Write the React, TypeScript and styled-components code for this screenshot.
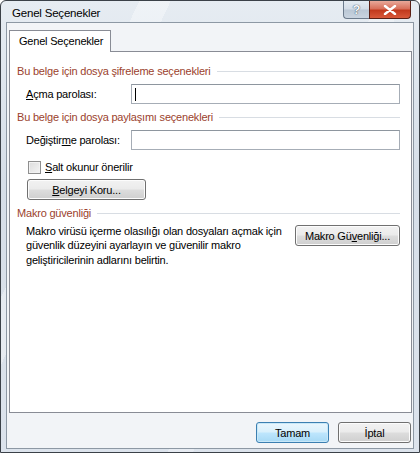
import styled, { createGlobalStyle } from 'styled-components';

const GlobalStyle = createGlobalStyle`
  html, body {
    margin: 0;
    padding: 0;
    background: #ffffff;
  }
  * {
    box-sizing: border-box;
  }
`;

const uiFont = `'Liberation Sans', Arial, sans-serif`;

const App = () => {
  return (
    <>
      <GlobalStyle />
      <Window>
        <TitleBar>
          <Title>Genel Seçenekler</Title>
          <Controls>
            <HelpButton aria-label="Yardım">?</HelpButton>
            <CloseButton aria-label="Kapat">
              <svg width="14" height="10" viewBox="0 0 14 10">
                <path
                  d="M2 1 L12 9 M12 1 L2 9"
                  stroke="#ffffff"
                  strokeWidth="2.4"
                  strokeLinecap="round"
                />
              </svg>
            </CloseButton>
          </Controls>
        </TitleBar>

        <Client>
          <TabStrip>
            <Tab>Genel Seçenekler</Tab>
          </TabStrip>
          <Panel>
            <SectionHeader>
              <SectionTitle>Bu belge için dosya şifreleme seçenekleri</SectionTitle>
              <Rule />
            </SectionHeader>
            <FieldRow>
              <FieldLabel>
                <Key>A</Key>çma parolası:
              </FieldLabel>
              <TextBox>
                <Caret />
              </TextBox>
            </FieldRow>

            <SectionHeader>
              <SectionTitle>Bu belge için dosya paylaşımı seçenekleri</SectionTitle>
              <Rule />
            </SectionHeader>
            <FieldRow>
              <FieldLabel>
                Değiştir<Key>m</Key>e parolası:
              </FieldLabel>
              <TextBox />
            </FieldRow>
            <CheckRow>
              <CheckBox />
              <span>
                <Key>S</Key>alt okunur önerilir
              </span>
            </CheckRow>
            <Indented>
              <PushButton $width={119}>
                <Key>B</Key>elgeyi Koru...
              </PushButton>
            </Indented>

            <SectionHeader>
              <SectionTitle>Makro güvenliği</SectionTitle>
              <Rule />
            </SectionHeader>
            <MacroRow>
              <MacroText>
                Makro virüsü içerme olasılığı olan dosyaları açmak için
                <br />
                güvenlik düzeyini ayarlayın ve güvenilir makro
                <br />
                geliştiricilerinin adlarını belirtin.
              </MacroText>
              <PushButton $width={105}>
                Makro Gü<Key>v</Key>enliği...
              </PushButton>
            </MacroRow>
          </Panel>

          <Footer>
            <PushButton $width={73} $default>
              Tamam
            </PushButton>
            <PushButton $width={73}>İptal</PushButton>
          </Footer>
        </Client>
      </Window>
    </>
  );
};

export default App;

const Window = styled.div`
  width: 420px;
  height: 453px;
  border: 1px solid #3b4148;
  border-radius: 6px 6px 0 0;
  background:
    linear-gradient(115deg, transparent 0 22%, rgba(255, 255, 255, 0.35) 22% 27%, transparent 27% 60%, rgba(255, 255, 255, 0.3) 60% 64%, transparent 64%),
    linear-gradient(180deg, #e6ecf2 0%, #d6dee8 40%, #dce3ec 100%);
  display: flex;
  flex-direction: column;
  font-family: ${uiFont};
  font-size: 11px;
  letter-spacing: -0.2px;
  color: #000000;
  overflow: hidden;
`;

const TitleBar = styled.div`
  height: 23px;
  display: flex;
  align-items: flex-start;
  padding-left: 11px;
`;

const Title = styled.div`
  margin-top: 6px;
  font-size: 11.5px;
  color: #000000;
  white-space: nowrap;
`;

const Controls = styled.div`
  margin-left: auto;
  margin-right: 8px;
  display: flex;
`;

const HelpButton = styled.div`
  width: 26px;
  height: 18px;
  border: 1px solid #6c7b8c;
  border-top: none;
  border-right: none;
  border-radius: 0 0 0 4px;
  background: linear-gradient(180deg, #e4ebf2 0%, #d3dce6 48%, #bac7d5 52%, #c9d4e0 100%);
  color: #f6f8fa;
  font-size: 13px;
  font-weight: bold;
  text-align: center;
  line-height: 17px;
  letter-spacing: 0;
  text-shadow: 0 0 1px #42505f, 0 0 1px #42505f;
`;

const CloseButton = styled.div`
  width: 42px;
  height: 18px;
  border: 1px solid #5a1f15;
  border-top: none;
  border-radius: 0 0 4px 0;
  background: linear-gradient(180deg, #e9a99a 0%, #d8705b 45%, #c2391d 55%, #d9593a 100%);
  display: flex;
  align-items: center;
  justify-content: center;
`;

const Client = styled.div`
  flex: 1;
  margin: 0 5px 3px 5px;
  border: 1px solid #8d98a4;
  background: #f2f4f7;
  padding: 7px 1px 5px 2px;
  display: flex;
  flex-direction: column;
`;

const TabStrip = styled.div`
  display: flex;
  height: 21px;
  position: relative;
  z-index: 1;
`;

const Tab = styled.div`
  height: 22px;
  width: 102px;
  padding: 4px 0 0 9px;
  border: 1px solid #898c95;
  border-bottom: none;
  background: #ffffff;
  white-space: nowrap;
`;

const Panel = styled.div`
  height: 362px;
  border: 1px solid #898c95;
  background: #ffffff;
  padding: 11px 11px 0 7px;
  display: flex;
  flex-direction: column;
`;

const SectionHeader = styled.div`
  display: flex;
  align-items: center;
  gap: 6px;
  height: 16px;
  & + & {
    margin-top: 0;
  }
`;

const SectionTitle = styled.span`
  color: #9b3f2d;
  white-space: nowrap;
`;

const Rule = styled.div`
  flex: 1;
  height: 1px;
  background: #d8dde3;
  margin-top: 1px;
`;

const FieldRow = styled.div`
  display: flex;
  align-items: center;
  padding-left: 9px;
  margin: 5px 0 5px;
`;

const FieldLabel = styled.span`
  width: 105px;
  white-space: nowrap;
`;

const TextBox = styled.div`
  flex: 1;
  height: 20px;
  border: 1px solid #a6adb6;
  border-top-color: #8e969f;
  background: #ffffff;
  display: flex;
  align-items: center;
  padding-left: 3px;
`;

const Caret = styled.div`
  width: 1px;
  height: 13px;
  background: #000000;
`;

const Key = styled.span`
  text-decoration: underline;
`;

const CheckRow = styled.div`
  display: flex;
  align-items: center;
  gap: 4px;
  padding-left: 11px;
  margin-top: 4px;
  height: 16px;
  white-space: nowrap;
`;

const CheckBox = styled.div`
  width: 13px;
  height: 13px;
  border: 1px solid #8f8f8f;
  background: linear-gradient(135deg, #dcdcdc 0%, #f4f4f4 100%);
  box-shadow: inset 0 0 0 1px #f2f2f2;
`;

const Indented = styled.div`
  padding-left: 10px;
  margin: 4px 0 5px;
`;

const PushButton = styled.button<{ $width: number; $default?: boolean }>`
  width: ${(p) => p.$width}px;
  height: 21px;
  padding: 0;
  margin: 0;
  font-family: ${uiFont};
  font-size: 11px;
  letter-spacing: -0.2px;
  color: #000000;
  white-space: nowrap;
  border-radius: 3px;
  border: 1px solid ${(p) => (p.$default ? '#3c7fb1' : '#707070')};
  background: ${(p) =>
    p.$default
      ? 'linear-gradient(180deg, #eaf6fd 0%, #d9f0fc 48%, #bee6fd 52%, #a7d9f5 100%)'
      : 'linear-gradient(180deg, #f2f2f2 0%, #ebebeb 48%, #dddddd 52%, #cfcfcf 100%)'};
  box-shadow: inset 0 0 0 1px ${(p) => (p.$default ? '#c8e8f8' : '#fcfcfc')};
  flex-shrink: 0;
`;

const MacroRow = styled.div`
  display: flex;
  align-items: flex-start;
  justify-content: space-between;
  padding-left: 9px;
  margin-top: 4px;
`;

const MacroText = styled.p`
  margin: -1.5px 0 0;
  line-height: 14.5px;
  white-space: nowrap;
`;

const Footer = styled.div`
  display: flex;
  justify-content: flex-end;
  gap: 9px;
  padding: 0 1px 0 0;
  margin-top: 9px;
`;
